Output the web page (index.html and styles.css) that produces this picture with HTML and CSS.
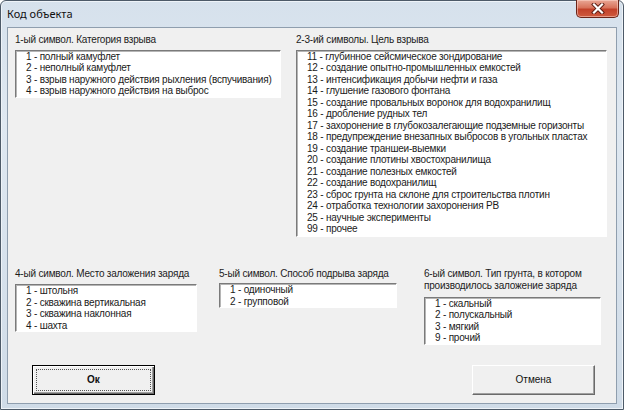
FILE: index.html
```html
<!DOCTYPE html>
<html>
  <head>
    <title>Код объекта</title>
    <link rel="stylesheet" href="styles.css">
  </head>
  <body>
    <div class="window">
      <div class="titlebar">
        <span class="title">Код объекта</span>
        <button class="close" title="Закрыть">
          <svg width="14" height="11" viewBox="0 0 14 11">
            <path d="M3 1.5 L11 9.5 M11 1.5 L3 9.5" stroke="#5a1b12" stroke-width="4" stroke-linecap="square"/>
            <path d="M3 1.5 L11 9.5 M11 1.5 L3 9.5" stroke="#ffffff" stroke-width="2.2" stroke-linecap="square"/>
          </svg>
        </button>
      </div>

      <div class="client">
        <div class="row row-top">
          <section class="group">
            <div class="caption">1-ый символ. Категория взрыва</div>
            <ul class="listbox lb-category">
              <li>1 - полный камуфлет</li>
              <li>2 - неполный камуфлет</li>
              <li>3 - взрыв наружного действия рыхления (вспучивания)</li>
              <li>4 - взрыв наружного действия на выброс</li>
            </ul>
          </section>

          <section class="group">
            <div class="caption">2-3-ий символы. Цель взрыва</div>
            <ul class="listbox lb-purpose">
              <li>11 - глубинное сейсмическое зондирование</li>
              <li>12 - создание опытно-промышленных емкостей</li>
              <li>13 - интенсификация добычи нефти и газа</li>
              <li>14 - глушение газового фонтана</li>
              <li>15 - создание провальных воронок для водохранилищ</li>
              <li>16 - дробление рудных тел</li>
              <li>17 - захоронение в глубокозалегающие подземные горизонты</li>
              <li>18 - предупреждение внезапных выбросов в угольных пластах</li>
              <li>19 - создание траншеи-выемки</li>
              <li>20 - создание плотины хвостохранилища</li>
              <li>21 - создание полезных емкостей</li>
              <li>22 - создание водохранилищ</li>
              <li>23 - сброс грунта на склоне для строительства плотин</li>
              <li>24 - отработка технологии захоронения РВ</li>
              <li>25 - научные эксперименты</li>
              <li>99 - прочее</li>
            </ul>
          </section>
        </div>

        <div class="row row-bottom">
          <section class="group">
            <div class="caption">4-ый символ. Место заложения заряда</div>
            <ul class="listbox lb-place">
              <li>1 - штольня</li>
              <li>2 - скважина вертикальная</li>
              <li>3 - скважина наклонная</li>
              <li>4 - шахта</li>
            </ul>
          </section>

          <section class="group">
            <div class="caption">5-ый символ. Способ подрыва заряда</div>
            <ul class="listbox lb-method">
              <li>1 - одиночный</li>
              <li>2 - групповой</li>
            </ul>
          </section>

          <section class="group">
            <div class="caption">6-ый символ. Тип грунта, в котором<br>производилось заложение заряда</div>
            <ul class="listbox lb-soil">
              <li>1 - скальный</li>
              <li>2 - полускальный</li>
              <li>3 - мягкий</li>
              <li>9 - прочий</li>
            </ul>
          </section>
        </div>

        <div class="buttons">
          <button class="btn btn-default"><span>Ок</span></button>
          <button class="btn">Отмена</button>
        </div>
      </div>
    </div>
  </body>
</html>
```

FILE: styles.css
```css
html, body {
  margin: 0;
  padding: 0;
}
body {
  width: 624px;
  height: 410px;
  overflow: hidden;
  font-family: "Liberation Sans", Arial, sans-serif;
  color: #1c1c1c;
}

/* window frame */
.window {
  box-sizing: border-box;
  width: 624px;
  height: 410px;
  border: 1px solid #4d5a68;
  border-radius: 6px 6px 0 0;
  padding: 0 6px 5px 6px;
  background: linear-gradient(180deg, #d6e1ec 0%, #dfe8f1 30%, #cfdbe7 100%);
  box-shadow: inset 0 0 0 1px #eef3f8;
  display: flex;
  flex-direction: column;
}
.titlebar {
  height: 26px;
  display: flex;
  align-items: flex-start;
  justify-content: space-between;
}
.title {
  font-family: "Noto Sans", sans-serif;
  font-size: 11px;
  line-height: 26px;
  color: #111;
}
.close {
  width: 43px;
  height: 18px;
  margin: -1px -2px 0 0;
  padding: 0;
  border: 1px solid #6b2418;
  border-top: none;
  border-radius: 0 0 5px 5px;
  background: linear-gradient(180deg, #e9a796 0%, #d8735c 45%, #c2412a 55%, #cf5a3e 100%);
  box-shadow: inset 0 0 0 1px rgba(255, 220, 210, 0.5);
  display: flex;
  align-items: center;
  justify-content: center;
}

/* client area */
.client {
  flex: 1;
  border: 1px solid #8f9eae;
  background: #f0f0f0;
  padding: 6px 9px 0 7px;
  letter-spacing: -0.2px;
}
.row {
  display: grid;
}
.row-top {
  grid-template-columns: 266px 311px;
  column-gap: 15px;
}
.row-bottom {
  margin-top: 31px;
  grid-template-columns: 182px 178px 182px;
  column-gap: 22px;
}
.row-bottom .group:last-child {
  margin-left: 5px;
}
.caption {
  font-size: 10px;
  line-height: 12.5px;
  margin-bottom: 3px;
  white-space: nowrap;
}
.row-bottom .caption {
  margin-bottom: 4px;
}

/* list boxes */
.listbox {
  list-style: none;
  margin: 0;
  padding: 0 0 0 10px;
  background: #fff;
  border-top: 1px solid #7a7a7a;
  border-left: 1px solid #7a7a7a;
  border-right: 1px solid #ffffff;
  border-bottom: 1px solid #ffffff;
  box-shadow: inset 1px 1px 0 #b5b5b5;
  overflow: hidden;
  font-size: 10px;
  line-height: 11.5px;
  color: #1a1a1a;
  white-space: nowrap;
}
.lb-category { height: 46px; }
.lb-purpose { height: 185px; }
.lb-place { height: 46px; }
.lb-method { height: 23px; margin-top: -1px; }
.lb-soil { height: 46px; }

/* command buttons */
.buttons {
  display: flex;
  justify-content: space-between;
  margin-top: 20px;
  padding: 0 12px 0 17px;
}
.btn {
  box-sizing: border-box;
  width: 123px;
  height: 30px;
  padding: 0;
  background: #f0f0f0;
  font-family: "Liberation Sans", Arial, sans-serif;
  font-size: 10px;
  color: #111;
  border: 1px solid;
  border-color: #ffffff #6a6a6a #6a6a6a #ffffff;
  box-shadow: inset -1px -1px 0 #a0a0a0;
}
.btn-default {
  border: 1px solid #000;
  box-shadow: inset 1px 1px 0 #ffffff, inset -1px -1px 0 #6a6a6a, inset -2px -2px 0 #a0a0a0;
  padding: 3px;
  font-weight: bold;
}
.btn-default span {
  display: flex;
  align-items: center;
  justify-content: center;
  height: 100%;
  border: 1px dotted #555;
  box-sizing: border-box;
}
```
